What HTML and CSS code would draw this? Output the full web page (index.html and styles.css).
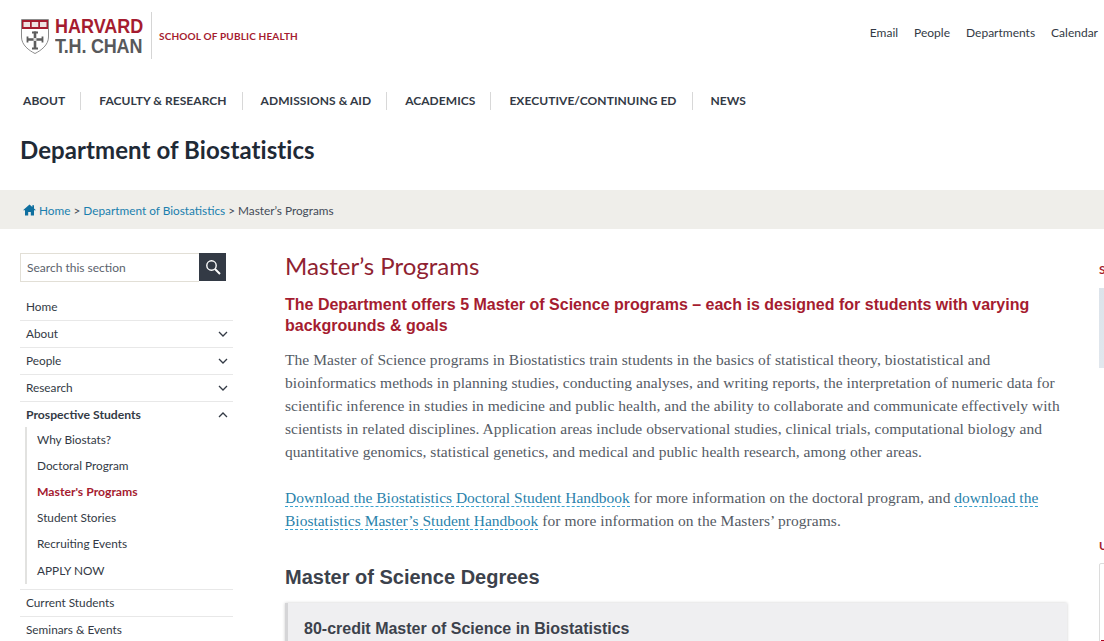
FILE: index.html
```html
<!DOCTYPE html>
<html lang="en">
<head>
    <meta charset="UTF-8">
    <meta name="viewport" content="width=device-width, initial-scale=1.0">
    <title>Master's Programs | Department of Biostatistics</title>
    <link rel="stylesheet" href="styles.css">
</head>
<body>
    <header class="top-bar">
        <a class="logo" href="#">
            <svg class="shield" width="28" height="35" viewBox="0 0 28 35">
                <path d="M0.500 0.500H27.500V18C27.500 26 20 31.500 14 34.500C8 31.500 0.500 26 0.500 18Z" fill="#fff" stroke="#8c8c8c"/>
                <rect x="1" y="1" width="26" height="9" fill="#a51c30"/>
                <rect x="2.500" y="3" width="6.500" height="5" fill="#efe3e3"/>
                <rect x="10.750" y="3" width="6.500" height="5" fill="#efe3e3"/>
                <rect x="19" y="3" width="6.500" height="5" fill="#efe3e3"/>
                <path d="M14 12.500V30M6.500 20.500H21.500" stroke="#5d5d5d" stroke-width="2.600"/>
                <path d="M11 13.500H17M11 29.500H17M6.500 17.500V23.500M21.500 17.500V23.500" stroke="#5d5d5d" stroke-width="1.800"/>
                <rect x="12.500" y="19" width="3" height="3" fill="#d8d8d8"/>
            </svg>
            <span class="wordmark">
                <span class="wordmark-top">HARVARD</span>
                <span class="wordmark-bottom">T.H. CHAN</span>
            </span>
            <span class="school">SCHOOL OF PUBLIC HEALTH</span>
        </a>
        <nav class="util-nav">
            <a href="#">Email</a>
            <a href="#">People</a>
            <a href="#">Departments</a>
            <a href="#">Calendar</a>
        </nav>
    </header>

    <nav class="main-nav">
        <a href="#">ABOUT</a>
        <a href="#">FACULTY &amp; RESEARCH</a>
        <a href="#">ADMISSIONS &amp; AID</a>
        <a href="#">ACADEMICS</a>
        <a href="#">EXECUTIVE/CONTINUING ED</a>
        <a href="#">NEWS</a>
    </nav>

    <div class="dept-title">Department of Biostatistics</div>

    <div class="breadcrumb">
        <svg class="home-icon" width="13" height="12" viewBox="0 0 13 12">
            <path d="M6.500 0.500L0 6.300H2V11.500H5.200V8H7.800V11.500H11V6.300H13L11 4.500V1.200H9.300V3Z" fill="#0f6f9f"/>
        </svg>
        <span><a href="#">Home</a> &gt; <a href="#">Department of Biostatistics</a> &gt; Master’s Programs</span>
    </div>

    <div class="page">
        <aside class="sidebar">
            <form class="search">
                <input type="text" placeholder="Search this section">
                <button type="button" aria-label="Search">
                    <svg width="16" height="16" viewBox="0 0 16 16" fill="none" stroke="#fff">
                        <circle cx="6.500" cy="6.500" r="4.700" stroke-width="1.400"/>
                        <path d="M10 10L15 15" stroke-width="2"/>
                    </svg>
                </button>
            </form>

            <ul class="side-nav">
                <li><a href="#">Home</a></li>
                <li><a href="#">About</a><svg class="chev" width="10" height="6" viewBox="0 0 10 6"><path d="M1 1L5 5L9 1" fill="none" stroke="#333a45" stroke-width="1.300"/></svg></li>
                <li><a href="#">People</a><svg class="chev" width="10" height="6" viewBox="0 0 10 6"><path d="M1 1L5 5L9 1" fill="none" stroke="#333a45" stroke-width="1.300"/></svg></li>
                <li><a href="#">Research</a><svg class="chev" width="10" height="6" viewBox="0 0 10 6"><path d="M1 1L5 5L9 1" fill="none" stroke="#333a45" stroke-width="1.300"/></svg></li>
                <li class="open">
                    <a class="open-link" href="#">Prospective Students</a><svg class="chev" width="10" height="6" viewBox="0 0 10 6"><path d="M1 5L5 1L9 5" fill="none" stroke="#333a45" stroke-width="1.300"/></svg>
                    <ul class="sub-nav">
                        <li><a href="#">Why Biostats?</a></li>
                        <li><a href="#">Doctoral Program</a></li>
                        <li><a class="current" href="#">Master's Programs</a></li>
                        <li><a href="#">Student Stories</a></li>
                        <li><a href="#">Recruiting Events</a></li>
                        <li><a href="#">APPLY NOW</a></li>
                    </ul>
                </li>
                <li><a href="#">Current Students</a></li>
                <li><a href="#">Seminars &amp; Events</a></li>
            </ul>
        </aside>

        <main class="content">
            <h1>Master’s Programs</h1>
            <h2 class="lead">The Department offers 5 Master of Science programs – each is designed for students with varying backgrounds &amp; goals</h2>
            <p>The Master of Science programs in Biostatistics train students in the basics of statistical theory, biostatistical and bioinformatics methods in planning studies, conducting analyses, and writing reports, the interpretation of numeric data for scientific inference in studies in medicine and public health, and the ability to collaborate and communicate effectively with scientists in related disciplines. Application areas include observational studies, clinical trials, computational biology and quantitative genomics, statistical genetics, and medical and public health research, among other areas.</p>
            <p><a href="#">Download the Biostatistics Doctoral Student Handbook</a> for more information on the doctoral program, and <a href="#">download the Biostatistics Master’s Student Handbook</a> for more information on the Masters’ programs.</p>
            <h2 class="degrees">Master of Science Degrees</h2>
            <div class="degree-card">
                <h3>80-credit Master of Science in Biostatistics</h3>
            </div>
        </main>

        <aside class="right-col">
            <div class="right-label">S</div>
            <div class="right-image"></div>
            <div class="right-label second">U</div>
            <div class="right-box"><div class="right-box-mark"></div></div>
        </aside>
    </div>
</body>
</html>
```

FILE: styles.css
```css
html, body {
    height: 641px;
    overflow: hidden;
}

body {
    margin: 0;
    font-family: "Lato", "Open Sans", sans-serif;
    color: #333a45;
    background: #fff;
}

a {
    text-decoration: none;
    color: inherit;
}

/* Header */
.top-bar {
    display: flex;
    justify-content: space-between;
    align-items: flex-start;
    height: 92px;
    padding: 12px 6px 0 21px;
    box-sizing: border-box;
}

.logo {
    display: flex;
    align-items: center;
    height: 47px;
}

.shield {
    margin-right: 6px;
    margin-top: 1px;
}

.wordmark {
    display: flex;
    flex-direction: column;
    justify-content: center;
    width: 88px;
    height: 47px;
    padding-right: 8px;
    border-right: 1px solid #d5d5d5;
    font-family: "Liberation Sans", sans-serif;
    font-weight: 700;
    line-height: 20px;
    white-space: nowrap;
}

.wordmark-top, .wordmark-bottom {
    font-size: 18px;
    transform: scaleY(1.120);
}

.wordmark-top {
    color: #a51c30;
}

.wordmark-bottom {
    color: #58595b;
    letter-spacing: -0.200px;
}

.school {
    margin-left: 7px;
    color: #a51c30;
    font-size: 10px;
    font-weight: 700;
    letter-spacing: 0.170px;
}

.util-nav {
    display: flex;
    gap: 16px;
    margin-top: 13px;
    font-size: 12px;
    line-height: 16px;
}

.main-nav {
    display: flex;
    height: 18px;
    padding-left: 23px;
    font-size: 12px;
    line-height: 18px;
    font-weight: 700;
    letter-spacing: 0.050px;
}

.main-nav a {
    padding-right: 15px;
    margin-right: 18px;
    border-right: 1px solid #d8d8d8;
}

.main-nav a:last-child {
    border-right: none;
}

.dept-title {
    height: 55px;
    padding: 25px 0 0 20px;
    font-size: 24px;
    line-height: 30px;
    font-weight: 700;
    letter-spacing: 0.070px;
    color: #1f2a36;
}

.breadcrumb {
    display: flex;
    align-items: center;
    height: 38px;
    padding: 1px 0 0 23px;
    background: #efeeea;
    font-size: 11.800px;
    color: #434b57;
}

.breadcrumb a {
    color: #1a7fae;
}

.home-icon {
    margin-right: 3px;
}

/* Page columns */
.page {
    display: flex;
    padding: 24px 0 0 20px;
}

.sidebar {
    width: 213px;
    flex: none;
    margin-right: 52px;
}

.search {
    display: flex;
    width: 206px;
    height: 29px;
}

.search input {
    flex: 1;
    min-width: 0;
    padding: 0 6px;
    border: 1px solid #e2dfd6;
    border-right: none;
    font-family: inherit;
    font-size: 12px;
    outline: none;
}

.search input::placeholder {
    color: #5b626d;
}

.search button {
    display: flex;
    align-items: center;
    justify-content: center;
    width: 27px;
    height: 28px;
    padding: 0;
    border: none;
    background: #333a45;
}

.side-nav, .sub-nav {
    list-style: none;
    margin: 0;
    padding: 0;
}

.side-nav {
    margin-top: 12px;
    font-size: 11.800px;
}

.side-nav > li {
    position: relative;
    padding-left: 6px;
    line-height: 26px;
    border-bottom: 1px solid #e8e8e8;
}

.side-nav > li:last-child {
    border-bottom: none;
}

.chev {
    position: absolute;
    right: 5px;
    top: 10px;
}

.open-link {
    font-size: 12.200px;
    font-weight: 700;
}

.sub-nav {
    margin: -1px 0 5px -1px;
    padding-left: 10px;
    border-left: 2px solid #e2e2e0;
}

.sub-nav li {
    line-height: 26px;
}

.sub-nav li:last-child {
    line-height: 27px;
}

.current {
    color: #a51c30;
    font-size: 12.200px;
    font-weight: 700;
}

/* Main content */
.content {
    width: 782px;
    flex: none;
}

.content h1 {
    margin: -2px 0 0;
    font-size: 24px;
    line-height: 30px;
    font-weight: 400;
    color: #8f2231;
}

.lead {
    margin: 13px 0 0;
    font-family: "Liberation Sans", sans-serif;
    font-size: 16px;
    line-height: 21px;
    font-weight: 700;
    color: #a51c30;
}

.content p {
    margin: 12px 0 23px;
    font-family: "Liberation Serif", serif;
    font-size: 15.500px;
    line-height: 23px;
    letter-spacing: 0.050px;
    color: #555b65;
}

.content p a {
    color: #2a82ab;
    letter-spacing: 0;
    border-bottom: 1px dashed #39a3d0;
}

.degrees {
    margin: 32px 0 0;
    font-family: "Liberation Sans", sans-serif;
    font-size: 20px;
    line-height: 26px;
    font-weight: 700;
    color: #3c424c;
}

.degree-card {
    margin-top: 13px;
    padding: 16px;
    background: #efeff1;
    border-left: 3px solid #d5d5d7;
    box-shadow: 0 0 3px rgba(0, 0, 0, 0.2);
}

.degree-card h3 {
    margin: 0;
    font-family: "Liberation Sans", sans-serif;
    font-size: 16px;
    line-height: 20px;
    font-weight: 700;
    color: #3c424c;
}

/* Right column, cut off by the window */
.right-col {
    flex: none;
    width: 200px;
    margin-left: 32px;
}

.right-label {
    margin-top: 9px;
    font-size: 12px;
    line-height: 16px;
    font-weight: 700;
    color: #a51c30;
}

.right-label.second {
    margin-top: 170px;
}

.right-image {
    height: 80px;
    margin-top: 10px;
    background: linear-gradient(135deg, #dce3ea, #eef1f5);
}

.right-box {
    height: 100px;
    margin-top: 9px;
    padding-top: 76px;
    border: 1px solid #dcdcdc;
    border-radius: 2px;
}

.right-box-mark {
    width: 4px;
    height: 3px;
    margin-left: 1px;
    background: #b00020;
}
```
